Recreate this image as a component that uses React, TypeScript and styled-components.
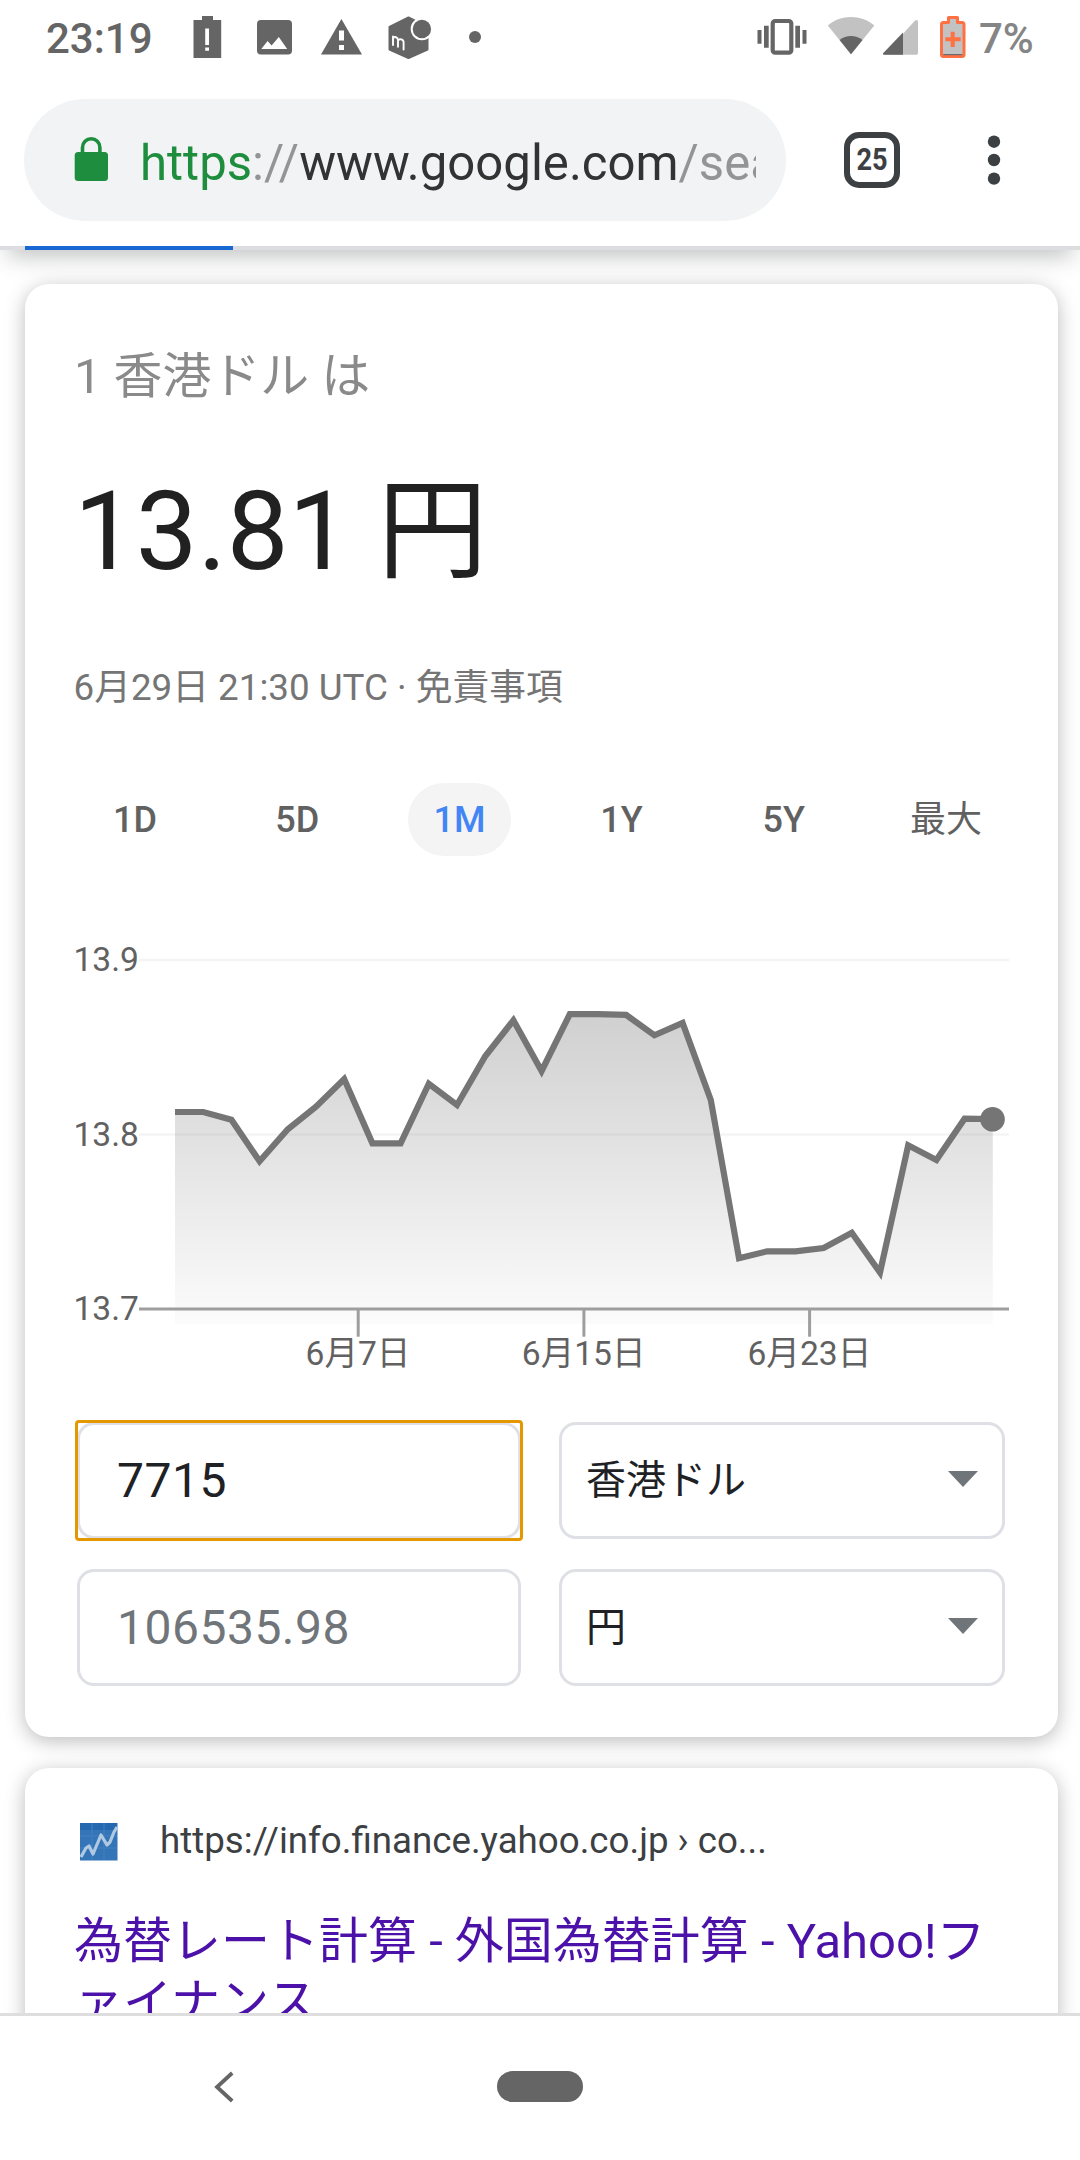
import React from "react";
import styled, { createGlobalStyle } from "styled-components";

const GlobalStyle = createGlobalStyle`
  * { box-sizing: border-box; }
  html, body { margin: 0; padding: 0; background: #fff; }
  body { font-family: Roboto, "Noto Sans CJK JP", sans-serif; }
`;

const Screen = styled.div`
  width: 1080px;
  height: 2160px;
  display: flex;
  flex-direction: column;
  overflow: hidden;
  background: #fff;
`;

/* ---------- status bar ---------- */

const TopChrome = styled.div`
  flex: none;
  position: relative;
  z-index: 2;
  background: #fff;
  box-shadow: 0 14px 22px -8px rgba(60, 64, 67, 0.33);
`;

const StatusBar = styled.header`
  height: 77px;
  display: flex;
  align-items: center;
  padding: 0 47px 0 46px;
`;

const Clock = styled.span`
  width: 136px;
  font-size: 42px;
  font-weight: 500;
  line-height: 79px;
  color: #656565;
`;

const BatteryText = styled.span`
  width: 54px;
  font-size: 42px;
  line-height: 79px;
  font-weight: 500;
  color: #858585;
  white-space: nowrap;
`;

const Spacer = styled.div`
  flex: 1;
`;

const StatusSvg = styled.svg`
  display: block;
  flex: none;
  height: 77px;
`;

/* ---------- browser toolbar ---------- */

const Toolbar = styled.div`
  height: 169px;
  display: flex;
  align-items: flex-start;
  padding: 22px 0 0 24px;
`;

const Omnibox = styled.div`
  width: 762px;
  height: 122px;
  border-radius: 61px;
  background: #f1f3f5;
  display: flex;
  align-items: center;
  padding: 0 30px 0 49.5px;
`;

const LockIcon = styled.svg`
  flex: none;
  margin-top: -3px;
`;

const Url = styled.div`
  flex: 1;
  margin-left: 31.5px;
  font-size: 49.1px;
  line-height: 122px;
  padding-top: 3px;
  height: 122px;
  white-space: nowrap;
  overflow: hidden;
  color: #929496;
`;

const Scheme = styled.span`
  color: #1e8e3e;
`;

const Host = styled.span`
  color: #333;
`;

const TabCount = styled.button`
  width: 56px;
  height: 56px;
  margin: 33px 0 0 58px;
  padding: 0;
  border: 6px solid #3c4043;
  border-radius: 15px;
  background: none;
  display: flex;
  align-items: center;
  justify-content: center;
`;

const TabNumber = styled.span`
  font: 700 31.5px/44px Roboto, sans-serif;
  color: #3c4043;
  transform: scaleX(0.86);
`;

const MenuButton = styled.button`
  margin: 33px 0 0 84px;
  width: 20px;
  height: 56px;
  padding: 0;
  border: 0;
  background: none;
`;

const Progress = styled.div`
  height: 4px;
  background: #dcdde0;
  padding-left: 25px;
`;

const ProgressFill = styled.div`
  width: 208px;
  height: 4px;
  background: #1967d2;
`;

/* ---------- page ---------- */

const Page = styled.main`
  flex: 1;
  min-height: 0;
  overflow: hidden;
  padding: 34px 22px 0 25px;
  display: flex;
  flex-direction: column;
  gap: 31px;
`;

const Card = styled.section`
  flex: none;
  border-radius: 24px;
  background: #fff;
  box-shadow: 0 4px 20px rgba(0, 0, 0, 0.27);
`;

const RateCard = styled(Card)`
  height: 1453px;
  padding-top: 63px;
`;

const ResultCard = styled(Card)`
  height: 340px;
  padding: 51px 49px 0;
`;

const RateFrom = styled.div`
  margin-left: 49px;
  font-size: 48.9px;
  line-height: 60px;
  color: #8a8a8a;
`;

const RateTo = styled.div`
  margin: 60px 0 0 49px;
  font-size: 110px;
  line-height: 130px;
  color: #212121;
`;

const RateDate = styled.div`
  margin: 69px 0 0 48.5px;
  font-size: 36.75px;
  line-height: 44px;
  color: #757575;
`;

const Ranges = styled.nav`
  margin: 73px 0 0 29px;
  width: 973px;
  display: grid;
  grid-template-columns: repeat(6, 1fr);
  justify-items: center;
`;

const Range = styled.button<{ $on?: boolean }>`
  height: 73px;
  width: 103px;
  padding: 0;
  border: 0;
  border-radius: 36px;
  background: ${(p) => (p.$on ? "#f4f4f4" : "none")};
  color: ${(p) => (p.$on ? "#4285f4" : "#616161")};
  font: 500 36px/73px Roboto, "Noto Sans CJK JP", sans-serif;
`;

const RangeLabel = styled.span<{ $light?: boolean }>`
  display: block;
  padding-top: 1px;
  font-weight: ${(p) => (p.$light ? 400 : 500)};
  line-height: 72px;
`;

const ChartSvg = styled.svg`
  display: block;
  margin-top: 84px;
  width: 1033px;
  height: 440px;
`;

const Form = styled.div`
  margin: 42px 53px 0 52px;
  display: grid;
  grid-template-columns: 444px 446px;
  grid-auto-rows: 117px;
  gap: 30px 38px;
`;

const Field = styled.div<{ $focus?: boolean; $muted?: boolean }>`
  border: 3px solid #dfe0e5;
  border-radius: 17px;
  padding-left: 37px;
  font-size: 48px;
  letter-spacing: 0.5px;
  line-height: 112px;
  color: ${(p) => (p.$muted ? "#70757a" : "#202124")};
  position: relative;
  ${(p) =>
    p.$focus &&
    `&::after {
      content: "";
      position: absolute;
      inset: -5px -4.5px -5px -5px;
      border: 3px solid #e59700;
      border-radius: 4px;
    }`}
`;

const Select = styled.div`
  border: 3px solid #dfe0e5;
  border-radius: 17px;
  padding: 0 24px 0 24px;
  display: flex;
  align-items: center;
  justify-content: space-between;
  font-size: 40px;
  line-height: 111px;
  color: #202124;
`;

const Arrow = styled.i`
  margin-top: -3px;
  border-left: 15.5px solid transparent;
  border-right: 15.5px solid transparent;
  border-top: 16px solid #70757a;
`;

const Source = styled.div`
  display: flex;
  align-items: center;
  height: 44px;
  font-size: 36.7px;
  line-height: 44px;
  color: #3c4043;
  white-space: nowrap;
`;

const Favicon = styled.svg`
  margin: 1px 42px 0 6px;
  flex: none;
`;

const Title = styled.h3`
  margin: 48px 0 0;
  font-size: 49px;
  font-weight: 400;
  line-height: 61px;
  color: #4b11a8;
  word-break: break-all;
`;

/* ---------- navigation bar ---------- */

const NavBar = styled.footer`
  height: 147px;
  flex: none;
  border-top: 3px solid #dedede;
  display: flex;
  align-items: flex-start;
  padding: 54px 0 0 213px;
  background: #fff;
  position: relative;
`;

const HomePill = styled.div`
  width: 86px;
  height: 31px;
  margin: 1px 0 0 260px;
  border-radius: 16px;
  background: #656565;
`;

const GREY = "#656565";
const LIGHT = "#c2c2c2";

const X0 = 175;
const STEP = 28.2;
const SERIES = [
  1112, 1112, 1119.7, 1161.3, 1129.3, 1106.7, 1079, 1143.3, 1143.3, 1083.7, 1105,
  1056.3, 1020.3, 1071, 1014.2, 1014.2, 1014.9, 1035.3, 1023, 1100, 1258.3, 1251.3,
  1251.3, 1248, 1232.7, 1272.5, 1145.3, 1160, 1118.7, 1119,
];
const LINE = SERIES.map((y, i) => `${(X0 + i * STEP).toFixed(1)},${y}`).join(" ");
const X_END = X0 + 29 * STEP;
const Y_LABELS = [
  { text: "13.9", y: 971 },
  { text: "13.8", y: 1145.7 },
  { text: "13.7", y: 1320 },
];
const X_LABELS = [
  { text: "6月7日", x: 358.2 },
  { text: "6月15日", x: 583.9 },
  { text: "6月23日", x: 809.6 },
];
const RANGES = ["1D", "5D", "1M", "1Y", "5Y"];

function NotificationIcons() {
  return (
    <StatusSvg width="300" viewBox="182 0 300 77">
      <path
        fill={GREY}
        fillRule="evenodd"
        d="M193.500 20H202v-4h11v4h8.200v38h-27.700zM205.200 28.500v16.500h3.800v-16.500zM205.200 47.500v3.300h3.800v-3.300z"
      />
      <rect x="257" y="20" width="35" height="34.500" rx="4" fill={GREY} />
      <path fill="#fff" d="M261.300 49l6.300-8 4 4.600 7.200-8.600 8.400 12z" />
      <path fill={GREY} d="M341.400 19L362 54.500h-41z" />
      <path fill="#fff" d="M339 30.500h5v10h-5zM339 45h5v5h-5z" />
      <path
        fill={GREY}
        stroke={GREY}
        strokeWidth="2"
        strokeLinejoin="round"
        d="M408.500 17.500l19 9.500v22.500l-19 8.500-19-8.500V27z"
      />
      <circle cx="421.900" cy="29" r="11.200" fill="#fff" />
      <circle cx="421.900" cy="29" r="9.200" fill={GREY} />
      <path
        fill="none"
        stroke="#fff"
        strokeWidth="1.900"
        strokeLinecap="round"
        strokeLinejoin="round"
        d="M393 45v-8.500M393 38.200c1.500-2.200 5-1 5 2v6.500M398 40.500c1.500-2.400 5.600-1 5.600 2v7"
      />
      <circle cx="475" cy="37" r="6" fill={GREY} />
    </StatusSvg>
  );
}

function SystemIcons() {
  return (
    <StatusSvg width="228" viewBox="751 0 228 77">
      <path
        fill={GREY}
        d="M757.500 30h4v13.700h-4zM764 25.700h4.700v22H764zM795.300 25.700h4.700v22h-4.700zM802.500 30h4v13.700h-4z"
      />
      <rect x="772.700" y="21" width="18.600" height="31.700" rx="2.500" fill="none" stroke={GREY} strokeWidth="4.200" />
      <path fill={LIGHT} d="M851 54.300L827.800 25.500C841 14.200 861 14.200 874.300 25.500z" />
      <path fill={GREY} d="M851 54.300L839.600 40C846 34.700 856 34.700 862.500 40z" />
      <path fill={LIGHT} d="M884 54.700L914.600 21c1.500-1.600 3.400-1 3.400 1v31c0 1-.7 1.700-1.700 1.700z" />
      <path fill={GREY} d="M903 32.500v22.200h-19.200c-1 0-1.200-1-.5-1.700z" />
      <path
        fill={LIGHT}
        stroke="#ff7043"
        strokeWidth="3"
        strokeLinejoin="round"
        d="M948.500 17.500h9v5h4.500q2 0 2 2v30q0 2-2 2h-18.500q-2 0-2-2v-30q0-2 2-2h5z"
      />
      <path fill="#6b6b6b" d="M943.200 54h19.200v1.200h-19.200z" />
      <path fill="#ff7043" d="M950.700 31.700h4v5.600h6v4h-6v5.700h-4v-5.700h-5.400v-4h5.400z" />
    </StatusSvg>
  );
}

function Chart() {
  return (
    <ChartSvg viewBox="25 940 1033 440">
      <defs>
        <linearGradient id="area" gradientUnits="userSpaceOnUse" x1="0" y1="1014" x2="0" y2="1324">
          <stop offset="0" stopColor="#757575" stopOpacity="0.34" />
          <stop offset="1" stopColor="#757575" stopOpacity="0.025" />
        </linearGradient>
      </defs>
      <g stroke="#f4f4f4" strokeWidth="2.700">
        <path d="M139 960H1009" />
        <path d="M139 1134.500H1009" />
      </g>
      <polygon fill="url(#area)" points={`${X0},1324.300 ${LINE} ${X_END},1324.300`} />
      <g stroke="#9e9e9e" strokeWidth="3">
        <path d="M139 1309H1009" />
        {X_LABELS.map((l) => (
          <path key={l.text} d={`M${l.x} 1309V1336.700`} />
        ))}
      </g>
      <polyline fill="none" stroke="#757575" strokeWidth="6.200" strokeMiterlimit="10" points={LINE} />
      <circle cx={X_END - 0.3} cy="1119.300" r="12.300" fill="#757575" />
      <g fill="#616161" fontSize="33.600">
        {Y_LABELS.map((l) => (
          <text key={l.text} x="73.500" y={l.y}>
            {l.text}
          </text>
        ))}
        {X_LABELS.map((l) => (
          <text key={l.text} x={l.x - 0.2} y="1365" textAnchor="middle">
            {l.text}
          </text>
        ))}
      </g>
    </ChartSvg>
  );
}

export default function App() {
  return (
    <Screen>
      <GlobalStyle />
      <TopChrome>
        <StatusBar>
          <Clock>23:19</Clock>
          <NotificationIcons />
          <Spacer />
          <SystemIcons />
          <BatteryText>7%</BatteryText>
        </StatusBar>
        <Toolbar>
          <Omnibox>
            <LockIcon width="35" height="46" viewBox="74 136 35 46">
              <rect x="74.700" y="152" width="33.300" height="29" rx="3.500" fill="#1e8e3e" />
              <path fill="none" stroke="#1e8e3e" strokeWidth="3.600" d="M82.500 153v-5.500a8.700 8.700 0 0 1 17.400 0v5.500" />
            </LockIcon>
            <Url>
              <Scheme>https</Scheme>://<Host>www.google.com</Host>/sea
            </Url>
          </Omnibox>
          <TabCount>
            <TabNumber>25</TabNumber>
          </TabCount>
          <MenuButton>
            <svg width="20" height="56" viewBox="984 132 20 56" fill="#3c4043">
              <circle cx="994" cy="141.700" r="6.200" />
              <circle cx="994" cy="160" r="6.200" />
              <circle cx="994" cy="178.600" r="6.200" />
            </svg>
          </MenuButton>
        </Toolbar>
        <Progress>
          <ProgressFill />
        </Progress>
      </TopChrome>
      <Page>
        <RateCard>
          <RateFrom>1 香港ドル は</RateFrom>
          <RateTo>13.81 円</RateTo>
          <RateDate>6月29日 21:30 UTC · 免責事項</RateDate>
          <Ranges>
            {RANGES.map((r) => (
              <Range key={r} $on={r === "1M"}>
                <RangeLabel>{r}</RangeLabel>
              </Range>
            ))}
            <Range>
              <RangeLabel $light>最大</RangeLabel>
            </Range>
          </Ranges>
          <Chart />
          <Form>
            <Field $focus>7715</Field>
            <Select>
              香港ドル
              <Arrow />
            </Select>
            <Field $muted>106535.98</Field>
            <Select>
              円
              <Arrow />
            </Select>
          </Form>
        </RateCard>
        <ResultCard>
          <Source>
            <Favicon width="38" height="38" viewBox="0 0 38 38">
              <rect width="37.500" height="37.500" fill="#3475b8" />
              <path d="M0 0h37v7H0z" fill="#2469b0" />
              <path d="M12 0v37M24 0v37M0 13h37M0 25h37" stroke="#4280be" strokeWidth="1" />
              <path
                d="M1 34L6 25l3-2 4 8 8-19 6 10 3-3 4-10 3-5"
                fill="none"
                stroke="#b0c9e3"
                strokeWidth="3.200"
                strokeLinejoin="round"
              />
            </Favicon>
            https://info.finance.yahoo.co.jp › co...
          </Source>
          <Title>為替レート計算 - 外国為替計算 - Yahoo!ファイナンス</Title>
        </ResultCard>
      </Page>
      <NavBar>
        <svg width="24" height="34" viewBox="213.500 2070 24 34">
          <path d="M232.700 2073L217.500 2087l15.200 14" fill="none" stroke={GREY} strokeWidth="3.800" />
        </svg>
        <HomePill />
      </NavBar>
    </Screen>
  );
}
